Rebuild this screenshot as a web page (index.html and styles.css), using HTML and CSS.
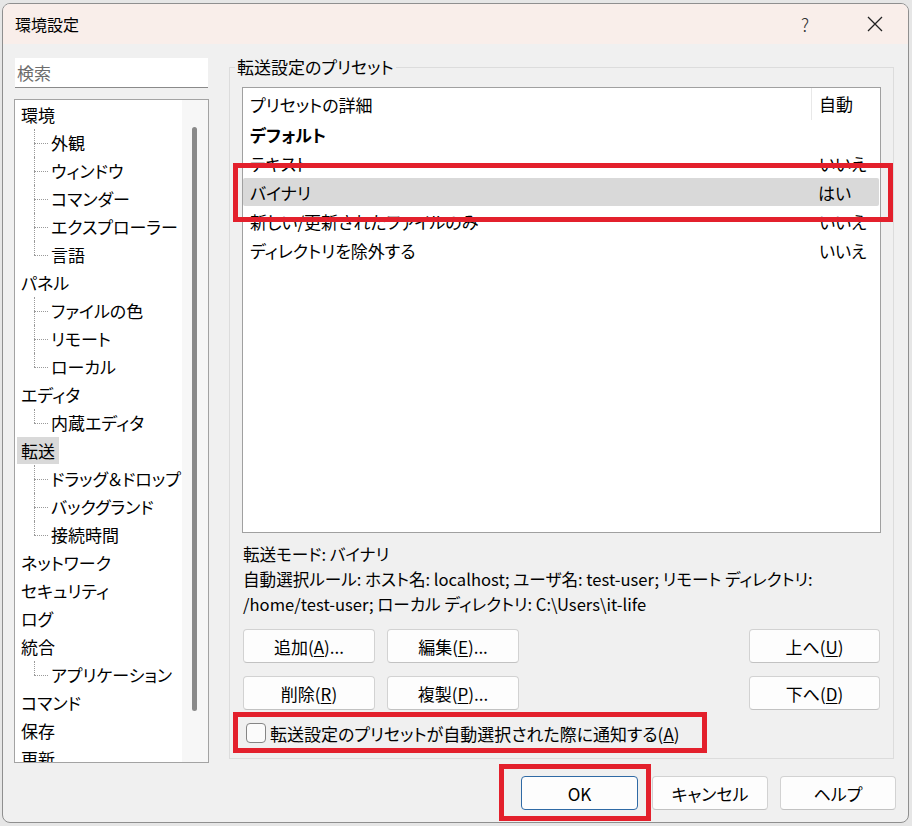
FILE: index.html
```html
<html>
<head>
  <meta charset="utf-8">
  <title>環境設定</title>
  <link rel="stylesheet" href="styles.css">
</head>
<body>
  <div class="window">
    <div class="titlebar">
      <span class="title">環境設定</span>
      <span class="cap-help">?</span>
      <span class="cap-close">
        <svg width="16" height="16" viewBox="0 0 16 16"><path d="M1 1 L15 15 M15 1 L1 15" stroke="#222" stroke-width="1.3" fill="none"/></svg>
      </span>
    </div>

    <div class="content">
      <div class="sidebar">
        <div class="search">検索</div>
        <div class="tree">
          <ul class="tree-list">
            <li><span class="node">環境</span>
              <ul>
                <li>外観</li>
                <li>ウィンドウ</li>
                <li>コマンダー</li>
                <li>エクスプローラー</li>
                <li>言語</li>
              </ul>
            </li>
            <li><span class="node">パネル</span>
              <ul>
                <li>ファイルの色</li>
                <li>リモート</li>
                <li>ローカル</li>
              </ul>
            </li>
            <li><span class="node">エディタ</span>
              <ul>
                <li>内蔵エディタ</li>
              </ul>
            </li>
            <li><span class="node selected">転送</span>
              <ul>
                <li>ドラッグ＆ドロップ</li>
                <li>バックグランド</li>
                <li>接続時間</li>
              </ul>
            </li>
            <li><span class="node">ネットワーク</span></li>
            <li><span class="node">セキュリティ</span></li>
            <li><span class="node">ログ</span></li>
            <li><span class="node">統合</span>
              <ul>
                <li>アプリケーション</li>
              </ul>
            </li>
            <li><span class="node">コマンド</span></li>
            <li><span class="node">保存</span></li>
            <li><span class="node">更新</span></li>
          </ul>
          <div class="vscroll"><div class="thumb"></div></div>
        </div>
      </div>

      <div class="main">
        <fieldset class="group">
          <legend>転送設定のプリセット</legend>

          <div class="listview">
            <div class="lv-head">
              <div class="col-name">プリセットの詳細</div>
              <div class="col-auto">自動</div>
            </div>
            <div class="lv-row bold"><div class="col-name">デフォルト</div><div class="col-auto"></div></div>
            <div class="lv-row"><div class="col-name">テキスト</div><div class="col-auto">いいえ</div></div>
            <div class="lv-row selected"><div class="col-name">バイナリ</div><div class="col-auto">はい</div></div>
            <div class="lv-row"><div class="col-name">新しい/更新されたファイルのみ</div><div class="col-auto">いいえ</div></div>
            <div class="lv-row"><div class="col-name">ディレクトリを除外する</div><div class="col-auto">いいえ</div></div>
          </div>

          <div class="info">
            <div>転送モード: バイナリ</div>
            <div>自動選択ルール: ホスト名: localhost; ユーザ名: test-user; リモート ディレクトリ:</div>
            <div>/home/test-user; ローカル ディレクトリ: C:\Users\it-life</div>
          </div>

          <div class="btn-grid">
            <button class="btn">追加(<u>A</u>)...</button>
            <button class="btn">編集(<u>E</u>)...</button>
            <button class="btn btn-right">上へ(<u>U</u>)</button>
            <button class="btn">削除(<u>R</u>)</button>
            <button class="btn">複製(<u>P</u>)...</button>
            <button class="btn btn-right">下へ(<u>D</u>)</button>
          </div>

          <label class="check">
            <span class="box"></span>
            <span>転送設定のプリセットが自動選択された際に通知する(<u>A</u>)</span>
          </label>
        </fieldset>

        <div class="dlg-buttons">
          <button class="btn btn-default">OK</button>
          <button class="btn cancel">キャンセル</button>
          <button class="btn">ヘルプ</button>
        </div>
      </div>
    </div>

    <!-- 注釈の赤枠 -->
    <div class="mark mark-row"></div>
    <div class="mark mark-check"></div>
    <div class="mark mark-ok"></div>
  </div>
</body>
</html>
```

FILE: styles.css
```css
html {
  background-color: #e6e6e6;
}

body {
  margin: 0;
  font-family: "Noto Sans CJK JP", "Noto Sans", sans-serif;
  font-feature-settings: "palt";
  color: #000;
}

.window {
  position: relative;
  box-sizing: border-box;
  width: 907px;
  height: 820px;
  margin: 3px 0 0 2px;
  border: 1px solid #8f8f8f;
  border-radius: 8px;
  background-color: #f0f0f0;
  overflow: hidden;
  display: flex;
  flex-direction: column;
}

/* barra de titulo */
.titlebar {
  height: 40px;
  display: flex;
  align-items: center;
  background-color: #f9eeea;
  flex-shrink: 0;
}

.title {
  flex: 1;
  padding-left: 12px;
  font-size: 16px;
}

.cap-help {
  width: 60px;
  text-align: center;
  font-size: 18px;
  font-weight: 300;
  color: #333;
}

.cap-close {
  width: 66px;
  margin-left: 7px;
  display: flex;
  justify-content: center;
}

.content {
  flex: 1;
  display: flex;
}

/* arbol de la izquierda */
.sidebar {
  width: 195px;
  padding: 14px 0 0 11px;
}

.search {
  box-sizing: border-box;
  height: 30px;
  margin: 0 1px;
  padding-left: 2px;
  background-color: #fff;
  border-bottom: 1px solid #8a8a8a;
  color: #6d6d6d;
  font-size: 17px;
  line-height: 29px;
}

.tree {
  box-sizing: border-box;
  height: 664px;
  margin-top: 11px;
  border: 1px solid #a3a3a3;
  background-color: #fff;
  display: flex;
  overflow: hidden;
}

.tree-list {
  flex: 1;
  list-style: none;
  margin: 0;
  padding: 1px 0 0 0;
  font-size: 17px;
}

.tree-list ul {
  list-style: none;
  margin: 0;
  padding: 0;
}

.node {
  display: inline-block;
  height: 27px;
  line-height: 27px;
  margin: 0 0 1px 2px;
  padding: 0 4px;
}

.node.selected {
  background-color: #d9d9d9;
}

.tree-list ul li {
  position: relative;
  height: 28px;
  line-height: 28px;
  padding-left: 36px;
  white-space: nowrap;
}

.tree-list ul li::before {
  content: "";
  position: absolute;
  left: 19px;
  top: 14px;
  width: 14px;
  border-top: 1px dotted #9a9a9a;
}

.tree-list ul li::after {
  content: "";
  position: absolute;
  left: 19px;
  top: 0;
  height: 28px;
  border-left: 1px dotted #9a9a9a;
}

.tree-list ul li:last-child::after {
  height: 14px;
}

.vscroll {
  width: 26px;
  background-color: #f7f7f7;
  padding-top: 27px;
  flex-shrink: 0;
}

.thumb {
  width: 5px;
  height: 584px;
  margin-left: 10px;
  border-radius: 3px;
  background-color: #8a8a8a;
}

/* panel principal */
.main {
  width: 667px;
  margin-left: 20px;
  padding-top: 12px;
}

.group {
  box-sizing: border-box;
  height: 703px;
  margin: 0 2px 0 0;
  padding: 0 12px 12px 12px;
  border: 1px solid #dcdcdc;
}

.group legend {
  margin-left: -7px;
  padding: 0 2px;
  font-size: 17px;
  line-height: 22px;
}

.listview {
  box-sizing: border-box;
  height: 446px;
  margin-top: 9px;
  border: 1px solid #a0a0a0;
  background-color: #fff;
  font-size: 17px;
}

.lv-head,
.lv-row {
  display: flex;
  align-items: center;
  white-space: nowrap;
}

.lv-head {
  height: 32px;
}

.lv-row {
  height: 28px;
}

.lv-row + .lv-row {
  margin-top: 1px;
}

.col-name {
  flex: 1;
  padding-left: 7px;
}

.col-auto {
  width: 61px;
  padding-left: 7px;
}

.lv-head .col-auto {
  height: 32px;
  line-height: 32px;
  border-left: 1px solid #e8e8e8;
}

.lv-row .col-auto {
  padding-left: 8px;
}

.lv-row.bold {
  font-weight: bold;
}

.lv-row.selected {
  margin-right: 1px;
  border-radius: 2px;
  background-color: #d9d9d9;
}

.info {
  margin-top: 9px;
  padding-left: 1px;
  font-size: 16.6px;
  line-height: 25px;
  white-space: nowrap;
}

.btn {
  box-sizing: border-box;
  height: 34px;
  border: 1px solid #d2d2d2;
  border-bottom-color: #c2c2c2;
  border-radius: 4px;
  background-color: #fdfdfd;
  font-family: inherit;
  font-feature-settings: "palt";
  font-size: 17px;
  color: #000;
  padding: 0;
}

.btn u {
  text-underline-offset: 2px;
}

.btn-grid {
  display: grid;
  grid-template-columns: 132px 132px 1fr 132px;
  column-gap: 12px;
  row-gap: 13px;
  margin-top: 12px;
  padding-left: 1px;
}

.btn-right {
  grid-column: 4;
  margin-right: 1px;
}

.check {
  display: flex;
  align-items: center;
  height: 26px;
  margin-top: 10px;
  padding-left: 4px;
  font-size: 17px;
  white-space: nowrap;
}

.check .box {
  box-sizing: border-box;
  width: 20px;
  height: 20px;
  margin-right: 4px;
  border: 1px solid #858585;
  border-radius: 4px;
  background-color: #fbfbfb;
}

.dlg-buttons {
  display: flex;
  justify-content: flex-end;
  margin-top: 17px;
}

.dlg-buttons .btn {
  width: 116px;
  margin-left: 12px;
}

.dlg-buttons .btn-default {
  width: 117px;
  border: 1px solid #2f6aa5;
  background-color: #fdfdfd;
}

.dlg-buttons .cancel {
  margin-left: 14px;
}

/* marcas rojas */
.mark {
  position: absolute;
  box-sizing: border-box;
  border: 5px solid #e3202c;
}

.mark-row {
  left: 230px;
  top: 159px;
  width: 660px;
  height: 59px;
}

.mark-check {
  left: 230px;
  top: 708px;
  width: 474px;
  height: 41px;
}

.mark-ok {
  left: 496px;
  top: 760px;
  width: 152px;
  height: 57px;
}
```
